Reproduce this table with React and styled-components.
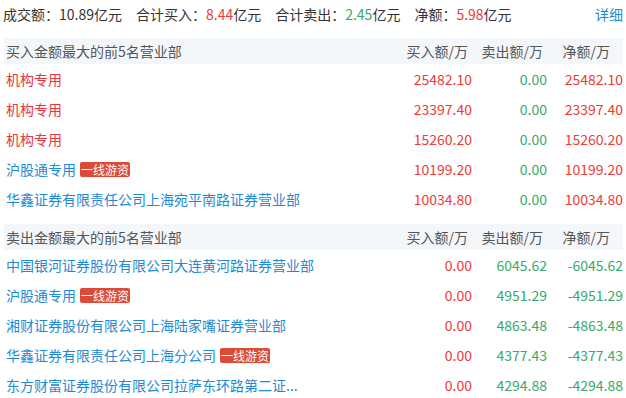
import styled, { createGlobalStyle } from "styled-components";

const GlobalStyle = createGlobalStyle`
  html, body {
    margin: 0;
    padding: 0;
    background: #fff;
  }
  body {
    font-family: "Microsoft YaHei", "Noto Sans CJK SC", sans-serif;
    font-size: 14px;
    color: #333;
  }
`;

const RED = "#ee3b35";
const GREEN = "#3aa86b";
const BLUE = "#1f8ad4";

const summary = [
  { label: "成交额", value: "10.89", color: "#333" },
  { label: "合计买入", value: "8.44", color: RED },
  { label: "合计卖出", value: "2.45", color: GREEN },
  { label: "净额", value: "5.98", color: RED },
];

const buyRows = [
  { name: "机构专用", org: true, buy: "25482.10", sell: "0.00", net: "25482.10" },
  { name: "机构专用", org: true, buy: "23397.40", sell: "0.00", net: "23397.40" },
  { name: "机构专用", org: true, buy: "15260.20", sell: "0.00", net: "15260.20" },
  { name: "沪股通专用", tag: "一线游资", buy: "10199.20", sell: "0.00", net: "10199.20" },
  { name: "华鑫证券有限责任公司上海宛平南路证券营业部", buy: "10034.80", sell: "0.00", net: "10034.80" },
];

const sellRows = [
  { name: "中国银河证券股份有限公司大连黄河路证券营业部", buy: "0.00", sell: "6045.62", net: "-6045.62" },
  { name: "沪股通专用", tag: "一线游资", buy: "0.00", sell: "4951.29", net: "-4951.29" },
  { name: "湘财证券股份有限公司上海陆家嘴证券营业部", buy: "0.00", sell: "4863.48", net: "-4863.48" },
  { name: "华鑫证券有限责任公司上海分公司", tag: "一线游资", buy: "0.00", sell: "4377.43", net: "-4377.43" },
  { name: "东方财富证券股份有限公司拉萨东环路第二证...", buy: "0.00", sell: "4294.88", net: "-4294.88" },
];

function Section({ title, rows, side }) {
  return (
    <Block>
      <HeadRow>
        <NameCell>{title}</NameCell>
        <HeadCell>买入额/万</HeadCell>
        <HeadCell>卖出额/万</HeadCell>
        <HeadCell $last>净额/万</HeadCell>
      </HeadRow>
      {rows.map((r, i) => (
        <Row key={i}>
          <NameCell>
            <Name $org={r.org}>{r.name}</Name>
            {r.tag && <Tag>{r.tag}</Tag>}
          </NameCell>
          <NumCell $color={RED}>{r.buy}</NumCell>
          <NumCell $color={GREEN}>{r.sell}</NumCell>
          <NumCell $color={side === "buy" ? RED : GREEN}>{r.net}</NumCell>
        </Row>
      ))}
    </Block>
  );
}

export default function App() {
  return (
    <Page>
      <GlobalStyle />
      <Summary>
        <Stats>
          {summary.map((s) => (
            <Stat key={s.label}>
              {s.label}：<Value $color={s.color}>{s.value}</Value>亿元
            </Stat>
          ))}
        </Stats>
        <Detail href="/#">详细</Detail>
      </Summary>
      <Section title="买入金额最大的前5名营业部" rows={buyRows} side="buy" />
      <Section title="卖出金额最大的前5名营业部" rows={sellRows} side="sell" />
    </Page>
  );
}

const Page = styled.div`
  width: 626px;
  padding: 0 3px 0 4px;
  box-sizing: border-box;
`;

const Summary = styled.div`
  height: 28px;
  display: flex;
  align-items: center;
  justify-content: space-between;
  margin: 0 0 10px -1px;
`;

const Stats = styled.div`
  display: flex;
  gap: 14px;
`;

const Stat = styled.span`
  color: #333;
`;

const Value = styled.span`
  color: ${(p) => p.$color};
`;

const Detail = styled.a`
  color: ${BLUE};
  text-decoration: none;
`;

const Block = styled.div`
  margin-bottom: 10px;
`;

const HeadRow = styled.div`
  display: grid;
  grid-template-columns: 1fr 75px 75px 76px;
  align-items: center;
  height: 26px;
  background: #f4f7fa;
  color: #555;
`;

const Row = styled.div`
  display: grid;
  grid-template-columns: 1fr 75px 75px 76px;
  align-items: center;
  height: 30px;
`;

const NameCell = styled.div`
  display: flex;
  align-items: center;
  gap: 4px;
  padding-left: 2px;
  white-space: nowrap;
  overflow: hidden;
`;

const Name = styled.span`
  color: ${(p) => (p.$org ? "#e8343c" : BLUE)};
`;

const Tag = styled.span`
  background: #dc4a38;
  color: #fff;
  font-size: 12px;
  line-height: 15px;
  padding: 0 1px;
  border-radius: 2px;
`;

const HeadCell = styled.div`
  text-align: right;
  padding-right: ${(p) => (p.$last ? "13px" : "4px")};
`;

const NumCell = styled.div`
  text-align: right;
  color: ${(p) => p.$color};
`;
